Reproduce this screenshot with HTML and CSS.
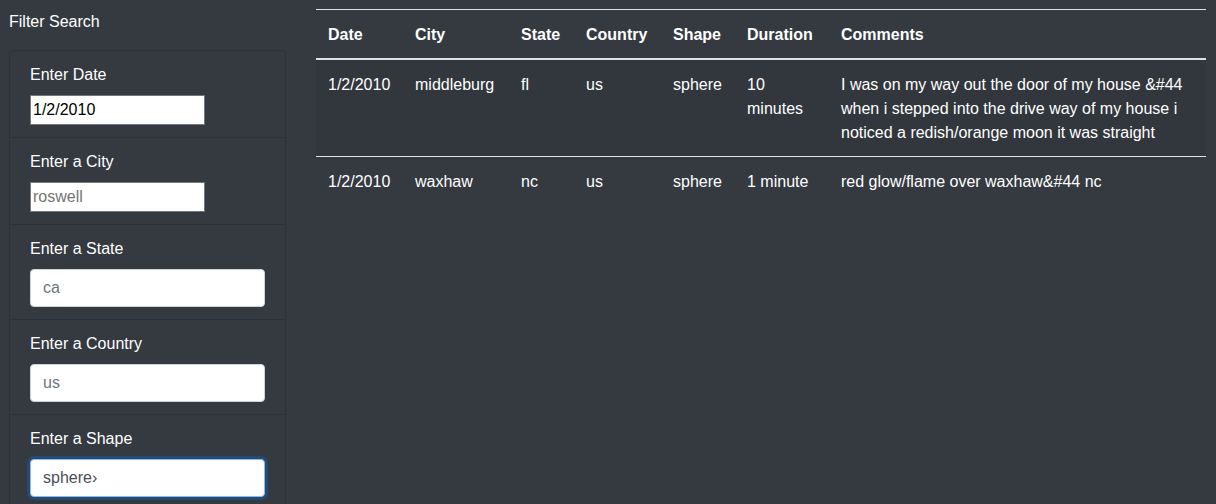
FILE: index.html
```html
<!DOCTYPE html>
<html lang="en">
<head>
<meta charset="utf-8">
<title>UFO Sightings</title>
<link rel="stylesheet" href="styles.css">
</head>
<body>
<div class="page">
  <aside class="sidebar">
    <div class="title">Filter Search</div>
    <ul class="filters">
      <li class="filter">
        <label class="flabel" for="datetime">Enter Date</label>
        <input class="plain-input" id="datetime" type="text" value="1/2/2010">
      </li>
      <li class="filter">
        <label class="flabel" for="city">Enter a City</label>
        <input class="plain-input" id="city" type="text" placeholder="roswell">
      </li>
      <li class="filter">
        <label class="flabel" for="state">Enter a State</label>
        <input class="form-input" id="state" type="text" placeholder="ca">
      </li>
      <li class="filter">
        <label class="flabel" for="country">Enter a Country</label>
        <input class="form-input" id="country" type="text" placeholder="us">
      </li>
      <li class="filter">
        <label class="flabel" for="shape">Enter a Shape</label>
        <input class="form-input focused" id="shape" type="text" value="sphere›">
      </li>
    </ul>
  </aside>
  <main class="main">
    <table class="ufo-table">
      <colgroup>
        <col class="c-date"><col class="c-city"><col class="c-state"><col class="c-country"><col class="c-shape"><col class="c-duration"><col class="c-comments">
      </colgroup>
      <thead>
        <tr>
          <th>Date</th><th>City</th><th>State</th><th>Country</th><th>Shape</th><th>Duration</th><th>Comments</th>
        </tr>
      </thead>
      <tbody>
        <tr class="striped">
          <td>1/2/2010</td><td>middleburg</td><td>fl</td><td>us</td><td>sphere</td><td>10 minutes</td>
          <td>I was on my way out the door of my house &amp;#44 when i stepped into the drive way of my house i noticed a redish/orange moon it was straight</td>
        </tr>
        <tr>
          <td>1/2/2010</td><td>waxhaw</td><td>nc</td><td>us</td><td>sphere</td><td>1 minute</td>
          <td>red glow/flame over waxhaw&amp;#44 nc</td>
        </tr>
      </tbody>
    </table>
  </main>
</div>
</body>
</html>
```
FILE: styles.css
```css
* { box-sizing: border-box; }

html, body {
  margin: 0;
  padding: 0;
  background: #343a40;
  height: 100%;
}

body {
  color: #ffffff;
  font-family: "Liberation Sans", Arial, sans-serif;
  font-size: 16px;
  line-height: 24px;
  overflow: hidden;
}

.page {
  display: flex;
  align-items: flex-start;
  padding-top: 9px;
}

.sidebar {
  width: 277px;
  margin-left: 9px;
  flex: none;
}

.title {
  font-size: 16px;
  line-height: 24px;
  margin-top: 1px;
  margin-bottom: 16px;
}

.filters {
  list-style: none;
  margin: 0;
  padding: 0;
}

.filter {
  padding: 12px 20px;
  border: 1px solid rgba(0, 0, 0, 0.125);
  border-top-width: 0;
}

.filter:first-child {
  border-top-width: 1px;
  border-top-left-radius: 4px;
  border-top-right-radius: 4px;
}

.flabel {
  display: block;
  margin-bottom: 8px;
  line-height: 24px;
  color: #ffffff;
}

.plain-input {
  display: block;
  width: 175px;
  height: 30px;
  margin: 0;
  padding: 1px 2px;
  border: 1px solid #767676;
  border-radius: 0;
  background: #ffffff;
  color: #000000;
  font-family: "Liberation Sans", Arial, sans-serif;
  font-size: 16px;
  outline: none;
}

.plain-input::placeholder { color: #757575; }

.form-input {
  display: block;
  width: 235px;
  height: 38px;
  margin: 0;
  padding: 6px 12px;
  border: 1px solid #ced4da;
  border-radius: 4px;
  background: #ffffff;
  color: #495057;
  font-family: "Liberation Sans", Arial, sans-serif;
  font-size: 16px;
  outline: none;
}

.form-input::placeholder { color: #6c757d; }

.form-input.focused {
  border-color: #80bdff;
  box-shadow: 0 0 0 3px rgba(0, 123, 255, 0.25);
}

.main {
  margin-left: 30px;
  width: 890px;
  flex: none;
}

.ufo-table {
  width: 890px;
  border-collapse: collapse;
  table-layout: fixed;
  color: #ffffff;
}

.c-date { width: 87px; }
.c-city { width: 106px; }
.c-state { width: 65px; }
.c-country { width: 87px; }
.c-shape { width: 74px; }
.c-duration { width: 94px; }
.c-comments { width: 377px; }

.ufo-table th {
  text-align: left;
  font-weight: bold;
  padding: 13px 12px 11px;
  vertical-align: bottom;
  border-top: 1px solid #dee2e6;
  border-bottom: 2px solid #dee2e6;
}

.ufo-table td {
  padding: 13px 12px 11px;
  vertical-align: top;
  border-top: 1px solid #dee2e6;
}

.ufo-table tr.striped td {
  background: rgba(0, 0, 0, 0.05);
}
```
